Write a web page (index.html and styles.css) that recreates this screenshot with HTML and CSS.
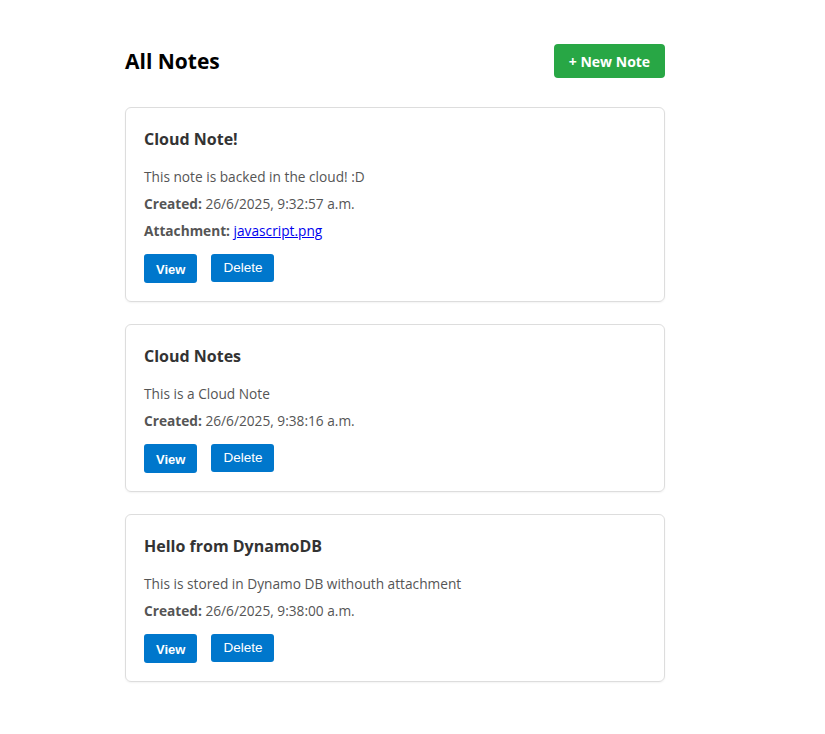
FILE: index.html
```html
<!DOCTYPE html>
<html lang="en">
<head>
<meta charset="utf-8">
<title>All Notes</title>
<link rel="stylesheet" href="styles.css">
</head>
<body>
<main class="container">
  <header class="header">
    <h1 class="title">All Notes</h1>
    <button class="btn-new">+ New Note</button>
  </header>

  <section class="card">
    <h3 class="card-title">Cloud Note!</h3>
    <p class="line">This note is backed in the cloud! :D</p>
    <p class="line"><strong>Created:</strong> 26/6/2025, 9:32:57 a.m.</p>
    <p class="line"><strong>Attachment:</strong> <a href="#" class="link">javascript.png</a></p>
    <div class="actions">
      <a href="#" class="btn btn-view">View</a>
      <button class="btn btn-delete">Delete</button>
    </div>
  </section>

  <section class="card">
    <h3 class="card-title">Cloud Notes</h3>
    <p class="line">This is a Cloud Note</p>
    <p class="line"><strong>Created:</strong> 26/6/2025, 9:38:16 a.m.</p>
    <div class="actions">
      <a href="#" class="btn btn-view">View</a>
      <button class="btn btn-delete">Delete</button>
    </div>
  </section>

  <section class="card">
    <h3 class="card-title">Hello from DynamoDB</h3>
    <p class="line">This is stored in Dynamo DB withouth attachment</p>
    <p class="line"><strong>Created:</strong> 26/6/2025, 9:38:00 a.m.</p>
    <div class="actions">
      <a href="#" class="btn btn-view">View</a>
      <button class="btn btn-delete">Delete</button>
    </div>
  </section>
</main>
</body>
</html>
```

FILE: styles.css
```css
html, body {
  margin: 0;
  padding: 0;
  background: #fff;
}

body {
  font-family: "Open Sans", "Noto Sans", sans-serif;
  color: #333;
}

.container {
  width: 540px;
  margin: 0 0 0 125px;
  padding: 44px 0 40px;
}

.header {
  display: flex;
  justify-content: space-between;
  align-items: center;
  margin-bottom: 29px;
}

.title {
  margin: 0;
  font-size: 21px;
  line-height: 30px;
  font-weight: 700;
  color: #000;
}

.btn-new {
  background: #28a745;
  color: #fff;
  border: none;
  border-radius: 4px;
  height: 34px;
  width: 111px;
  font-family: "Open Sans", sans-serif;
  font-size: 14px;
  font-weight: 700;
  cursor: pointer;
}

.card {
  border: 1px solid #ddd;
  border-radius: 6px;
  padding: 19px 18px 18px;
  margin-bottom: 22px;
  box-shadow: 0 1px 2px rgba(0,0,0,0.05);
}

.card-title {
  margin: 0 0 16px;
  font-size: 16px;
  line-height: 24px;
  font-weight: 700;
  color: #333;
}

.line {
  margin: 0 0 8px;
  font-size: 13.7px;
  line-height: 19px;
  color: #555;
}

.line strong {
  color: #555;
}

.link {
  color: #0000ee;
}

.actions {
  display: flex;
  align-items: flex-start;
  gap: 14px;
  margin-top: 14px;
}

.btn {
  background: #0077cc;
  color: #fff;
  border: none;
  border-radius: 3px;
  padding: 0 12px;
  font-family: "Liberation Sans", Arial, sans-serif;
  text-decoration: none;
  cursor: pointer;
}

.btn-view {
  font-size: 13px;
  font-weight: 700;
  height: 29px;
  line-height: 31px;
  display: inline-block;
}

.btn-delete {
  font-size: 13.5px;
  height: 28px;
  line-height: 26px;
}
```
